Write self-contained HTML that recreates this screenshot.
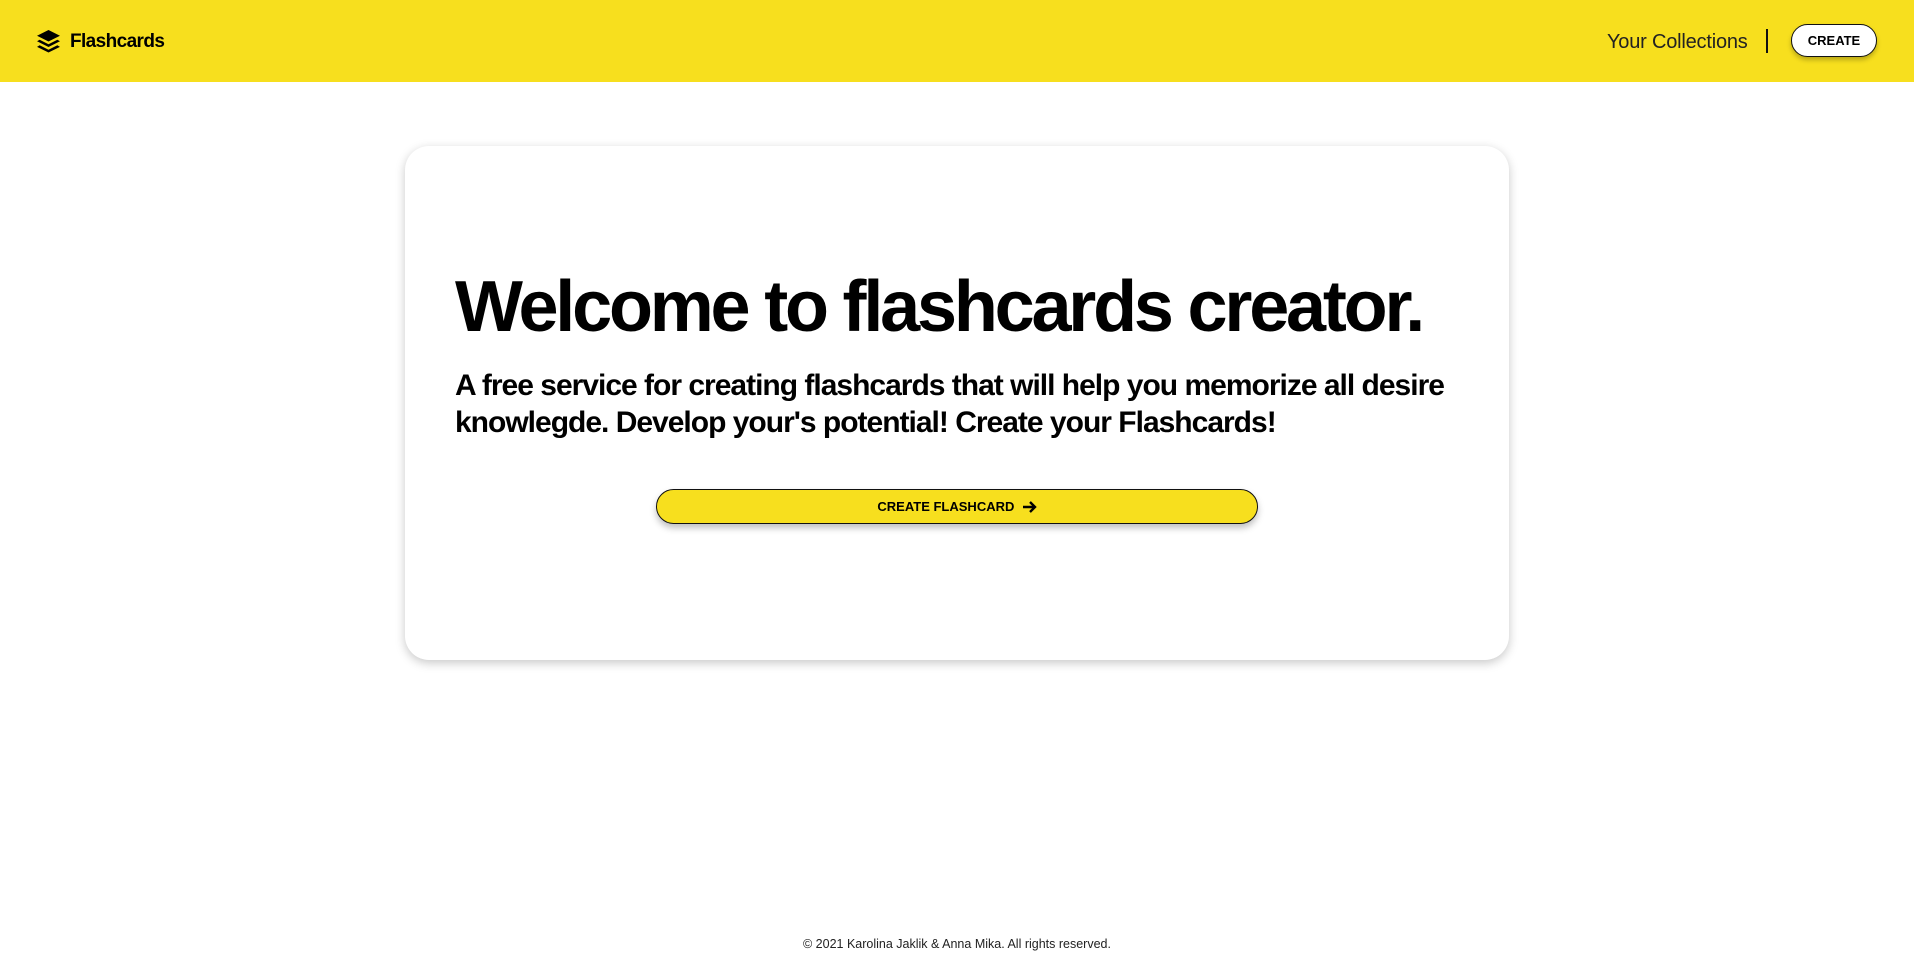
<!DOCTYPE html>
<html><head><meta charset="utf-8"><style>
*{margin:0;padding:0;box-sizing:border-box}
body{width:1914px;height:964px;background:#fff;font-family:"Liberation Sans",sans-serif;color:#000;position:relative;overflow:hidden}
header{position:absolute;left:0;top:0;width:1914px;height:82px;background:#f7df1e}
.logo{position:absolute;left:36px;top:29px;display:flex;align-items:center}
.logo span{font-size:19px;font-weight:bold;margin-left:9px;letter-spacing:-0.6px}
.coll{position:absolute;left:1607px;top:31px;font-size:20px;color:#222;letter-spacing:-0.2px}
.div{position:absolute;left:1766px;top:29px;width:2px;height:24px;background:#111}
.cbtn{position:absolute;left:1791px;top:24px;width:86px;height:33px;background:#fff;border:1.5px solid #111;border-radius:17px;font-size:13px;font-weight:bold;text-align:center;line-height:31px;box-shadow:0 3px 5px rgba(0,0,0,.25)}
.card{position:absolute;left:405px;top:146px;width:1104px;height:514px;border-radius:24px;background:#fff;box-shadow:0 3px 10px rgba(0,0,0,.22)}
h1{position:absolute;left:455px;top:266px;font-size:72px;font-weight:bold;letter-spacing:-3.2px;white-space:nowrap}
p.sub{position:absolute;left:455px;top:367px;width:1060px;font-size:30px;font-weight:bold;line-height:37px;letter-spacing:-1px}
.big{position:absolute;left:656px;top:489px;width:602px;height:35px;background:#f7df1e;border:1.5px solid #111;border-radius:18px;box-shadow:0 4px 7px rgba(0,0,0,.25);font-size:13px;font-weight:bold;display:flex;align-items:center;justify-content:center}
footer{position:absolute;top:937px;width:100%;text-align:center;font-size:12.5px;color:#222}
</style></head><body>
<header>
<div class="logo"><svg width="25" height="25" viewBox="0 0 24 24"><path d="M12 1 L23 6.5 L12 12 L1 6.5Z" fill="#000"/><path d="M3.5 10.3 L12 14.6 L20.5 10.3 L23 11.8 L12 17.3 L1 11.8Z" fill="#000"/><path d="M3.5 15.6 L12 19.9 L20.5 15.6 L23 17.1 L12 22.6 L1 17.1Z" fill="#000"/></svg><span>Flashcards</span></div>
<div class="coll">Your Collections</div>
<div class="div"></div>
<div class="cbtn">CREATE</div>
</header>
<div class="card"></div>
<h1>Welcome to flashcards creator.</h1>
<p class="sub">A free service for creating flashcards that will help you memorize all desire<br>knowlegde. Develop your's potential! Create your Flashcards!</p>
<div class="big">CREATE FLASHCARD&nbsp;&nbsp;<svg width="15" height="14" viewBox="0 0 15 14"><path d="M1 7H13M8 2L13 7L8 12" stroke="#000" stroke-width="2.4" fill="none"/></svg></div>
<footer>© 2021 Karolina Jaklik &amp; Anna Mika. All rights reserved.</footer>
</body></html>
